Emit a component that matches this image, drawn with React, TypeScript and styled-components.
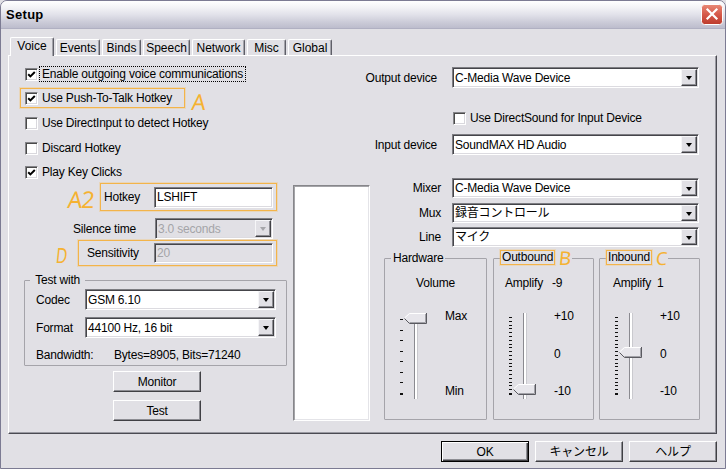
import React from "react";
import styled, { createGlobalStyle } from "styled-components";

const FACE = "#e1e0e5";
const ORANGE = "#f3b44a";

const GlobalStyle = createGlobalStyle`
  * { box-sizing: border-box; }
  html, body { margin: 0; padding: 0; background: ${FACE}; }
  body {
    font-family: "Liberation Sans", Arial, "Noto Sans CJK JP", sans-serif;
    font-size: 12px;
    letter-spacing: -0.2px;
    color: #000;
  }
`;

const Window = styled.div`
  width: 726px;
  height: 469px;
  display: flex;
  flex-direction: column;
  background: ${FACE};
  border: 1px solid #7c7b93;
  border-radius: 7px 7px 0 0;
  overflow: hidden;
`;

const TitleBar = styled.div`
  height: 28px;
  flex: none;
  display: flex;
  align-items: center;
  justify-content: space-between;
  padding: 0 2px 0 5px;
  background: linear-gradient(
    to bottom,
    #ffffff 0%,
    #f4f4f7 22%,
    #e2e2ea 50%,
    #cacad7 80%,
    #bdbdcd 100%
  );
  border-bottom: 1px solid #b0b0c2;
`;

const Title = styled.span`
  font-weight: 700;
  font-size: 13px;
  letter-spacing: 0.3px;
`;

const CloseBox = styled.div`
  width: 22px;
  height: 21px;
  display: flex;
`;

const Body = styled.div`
  flex: 1;
  display: flex;
  flex-direction: column;
  padding: 8px 8px 0 7px;
`;

const TabStrip = styled.div`
  height: 18px;
  display: flex;
  align-items: flex-end;
  gap: 2px;
  padding-left: 2px;
`;

const Tab = styled.div<{ $active?: boolean; $w: number }>`
  width: ${(p) => p.$w}px;
  height: ${(p) => (p.$active ? 19 : 16)}px;
  margin-bottom: ${(p) => (p.$active ? -1 : 0)}px;
  position: relative;
  z-index: ${(p) => (p.$active ? 2 : 1)};
  background: ${FACE};
  border-top: 1px solid #ffffff;
  border-left: 1px solid #ffffff;
  border-right: 1px solid #5f5f68;
  border-radius: 2px 2px 0 0;
  box-shadow: inset -1px 0 0 #a3a3aa;
  display: flex;
  align-items: center;
  justify-content: center;
  padding-bottom: ${(p) => (p.$active ? 2 : 0)}px;
  white-space: nowrap;
  letter-spacing: 0;
`;

const Panel = styled.div`
  height: 379px;
  flex: none;
  display: flex;
  border-top: 1px solid #ffffff;
  border-left: 1px solid #ffffff;
  border-right: 1px solid #4a4a52;
  border-bottom: 1px solid #4a4a52;
  box-shadow: inset -1px -1px 0 #9a9aa2;
`;

const LeftCol = styled.div`
  width: 282px;
  flex: none;
  display: flex;
  flex-direction: column;
  align-items: flex-start;
  padding-top: 10px;
`;

const RightArea = styled.div`
  flex: 1;
  display: flex;
  flex-direction: column;
  align-items: flex-start;
  padding-top: 11px;
`;

/* ---------- checkbox ---------- */

const Box = styled.span`
  width: 13px;
  height: 13px;
  flex: none;
  display: flex;
  align-items: center;
  justify-content: center;
  background: #ffffff;
  border-top: 1px solid #858589;
  border-left: 1px solid #858589;
  border-right: 1px solid #ffffff;
  border-bottom: 1px solid #ffffff;
  box-shadow: inset 1px 1px 0 #4a4a4a, inset -1px -1px 0 #d9d8dd;
`;

const CheckRow = styled.div<{ $ml: number; $mt: number }>`
  display: flex;
  align-items: center;
  gap: 2px;
  height: 16px;
  margin-left: ${(p) => p.$ml}px;
  margin-top: ${(p) => p.$mt}px;
`;

const CheckLabel = styled.span<{ $focus?: boolean }>`
  padding: 0 2px;
  line-height: 14px;
  white-space: nowrap;
  outline: ${(p) => (p.$focus ? "1px dotted #000" : "none")};
`;

function Check({ on }: { on?: boolean }) {
  return (
    <Box>
      {on && (
        <svg width="9" height="9" viewBox="0 0 9 9">
          <path
            d="M1.2 4.2 L3.4 6.4 L7.8 2"
            fill="none"
            stroke="#000"
            strokeWidth="2"
          />
        </svg>
      )}
    </Box>
  );
}

/* ---------- orange annotations ---------- */

const MarkFrame = styled.div<{ $w: number; $h: number; $pl: number }>`
  width: ${(p) => p.$w}px;
  height: ${(p) => p.$h}px;
  flex: none;
  display: flex;
  align-items: center;
  gap: 2px;
  padding: 0 3px 0 ${(p) => p.$pl}px;
  border: 1px solid ${ORANGE};
  box-shadow: 0 0 0 1px rgba(246, 196, 110, 0.35);
`;

const Annot = styled.span<{ $size: number; $sx?: number; $mt?: number }>`
  font-family: "Noto Sans", "DejaVu Sans", sans-serif;
  font-size: ${(p) => p.$size}px;
  line-height: 14px;
  height: 14px;
  color: #f5b232;
  display: inline-block;
  margin-top: ${(p) => p.$mt ?? 0}px;
  transform: skewX(-6deg) scaleX(${(p) => p.$sx ?? 1});
  transform-origin: left center;
  letter-spacing: -1px;
`;

const MarkRow = styled.div<{ $ml: number; $mt: number }>`
  display: flex;
  align-items: center;
  margin-left: ${(p) => p.$ml}px;
  margin-top: ${(p) => p.$mt}px;
`;

/* ---------- fields ---------- */

const FieldRow = styled.div<{ $pr: number; $mt: number }>`
  align-self: stretch;
  display: flex;
  align-items: center;
  justify-content: flex-end;
  padding-right: ${(p) => p.$pr}px;
  margin-top: ${(p) => p.$mt}px;
`;

const FieldLabel = styled.span<{ $grow?: boolean; $mr?: number; $w?: number }>`
  flex: ${(p) => (p.$grow ? 1 : "none")};
  width: ${(p) => (p.$w ? `${p.$w}px` : "auto")};
  margin-right: ${(p) => p.$mr ?? 0}px;
  white-space: nowrap;
  line-height: 14px;
`;

const Field = styled.div<{ $w: number; $h: number; $disabled?: boolean; $ml?: number }>`
  width: ${(p) => p.$w}px;
  height: ${(p) => p.$h}px;
  flex: none;
  margin-left: ${(p) => p.$ml ?? 0}px;
  display: flex;
  align-items: center;
  padding: 1px;
  background: ${(p) => (p.$disabled ? FACE : "#ffffff")};
  color: ${(p) => (p.$disabled ? "#a4a4a8" : "#000")};
  border-top: 1px solid #7d7d82;
  border-left: 1px solid #7d7d82;
  border-right: 1px solid #ffffff;
  border-bottom: 1px solid #ffffff;
  box-shadow: inset 1px 1px 0 #45454a, inset -1px -1px 0 #dcdbe0;
`;

const FieldText = styled.span`
  flex: 1;
  padding-left: 1px;
  line-height: 14px;
  white-space: nowrap;
  overflow: hidden;
`;

const ArrowBtn = styled.span<{ $disabled?: boolean }>`
  width: 16px;
  align-self: stretch;
  flex: none;
  display: flex;
  align-items: center;
  justify-content: center;
  background: ${FACE};
  border-top: 1px solid #f6f6f8;
  border-left: 1px solid #f6f6f8;
  border-right: 1px solid #404044;
  border-bottom: 1px solid #404044;
  box-shadow: inset -1px -1px 0 #8d8d93;
  &::after {
    content: "";
    width: 0;
    height: 0;
    margin-top: 1px;
    border-left: 3.5px solid transparent;
    border-right: 3.5px solid transparent;
    border-top: 4px solid ${(p) => (p.$disabled ? "#a6a6aa" : "#000")};
  }
`;

function Combo(props: { w: number; h: number; value: string; disabled?: boolean; ml?: number }) {
  return (
    <Field $w={props.w} $h={props.h} $disabled={props.disabled} $ml={props.ml}>
      <FieldText>{props.value}</FieldText>
      <ArrowBtn $disabled={props.disabled} />
    </Field>
  );
}

/* ---------- group boxes ---------- */

const Group = styled.fieldset<{ $w: number; $h: number; $ml?: number; $mt?: number }>`
  margin: ${(p) => p.$mt ?? 0}px 0 0 ${(p) => p.$ml ?? 0}px;
  padding: 0;
  min-inline-size: 0;
  width: ${(p) => p.$w}px;
  height: ${(p) => p.$h}px;
  flex: none;
  border: 1px solid #a5a4aa;
  border-radius: 1px;
`;

const Legend = styled.legend<{ $h: number; $ml?: number }>`
  margin-left: ${(p) => p.$ml ?? 6}px;
  padding: 0 1px;
  height: ${(p) => p.$h}px;
  line-height: ${(p) => p.$h - 2}px;
  border: 1px solid transparent;
  white-space: nowrap;
`;

const LegendMark = styled.span`
  display: inline-block;
  border: 1px solid ${ORANGE};
  box-shadow: 0 0 0 1px rgba(246, 196, 110, 0.3);
  padding: 0 1px;
  line-height: 13px;
  margin-left: -2px;
  margin-top: -1px;
  vertical-align: top;
`;

const GroupBody = styled.div<{ $pl?: number }>`
  display: flex;
  flex-direction: column;
  align-items: flex-start;
  padding-left: ${(p) => p.$pl ?? 0}px;
`;

const GroupRow = styled.div<{ $mt: number }>`
  display: flex;
  align-items: center;
  margin-top: ${(p) => p.$mt}px;
`;

const PushButton = styled.button<{ $ml?: number; $mt?: number; $default?: boolean }>`
  width: 88px;
  height: 21px;
  flex: none;
  margin: ${(p) => p.$mt ?? 0}px 0 0 ${(p) => p.$ml ?? 0}px;
  padding: 0;
  font: inherit;
  letter-spacing: inherit;
  color: #000;
  background: ${FACE};
  border-top: 1px solid ${(p) => (p.$default ? "#000" : "#ffffff")};
  border-left: 1px solid ${(p) => (p.$default ? "#000" : "#ffffff")};
  border-right: 1px solid ${(p) => (p.$default ? "#000" : "#404044")};
  border-bottom: 1px solid ${(p) => (p.$default ? "#000" : "#404044")};
  box-shadow: ${(p) =>
    p.$default
      ? "inset 1px 1px 0 #ffffff, inset -1px -1px 0 #404044, inset -2px -2px 0 #8d8d93"
      : "inset -1px -1px 0 #8d8d93"};
  line-height: 14px;
`;

/* ---------- right side ---------- */

const DeviceRow = styled.div<{ $mt?: number }>`
  display: flex;
  align-items: center;
  margin-top: ${(p) => p.$mt ?? 0}px;
`;

const RowLabel = styled.span<{ $w: number; $pr?: number }>`
  width: ${(p) => p.$w}px;
  flex: none;
  text-align: right;
  padding-right: ${(p) => p.$pr ?? 0}px;
  white-space: nowrap;
  line-height: 14px;
`;

const BottomArea = styled.div`
  display: flex;
  align-items: flex-start;
  margin-top: 23px;
`;

const MiddleBox = styled.div`
  width: 77px;
  height: 236px;
  flex: none;
  margin: 7px 0 0 2px;
  background: #ffffff;
  border-top: 1px solid #86868a;
  border-left: 1px solid #86868a;
  border-right: 1px solid #ffffff;
  border-bottom: 1px solid #ffffff;
  box-shadow: inset 1px 1px 0 #a4a4a8, inset -1px -1px 0 #e4e4e8;
`;

const MixerArea = styled.div`
  display: flex;
  flex-direction: column;
  align-items: flex-start;
`;

const GroupsRow = styled.div`
  display: flex;
  margin: 3px 0 0 14px;
`;

const AmpLine = styled.div<{ $center?: boolean; $pl?: number }>`
  align-self: stretch;
  margin-top: 9px;
  line-height: 14px;
  text-align: ${(p) => (p.$center ? "center" : "left")};
  padding-left: ${(p) => p.$pl ?? 0}px;
  white-space: nowrap;
`;

const AmpValue = styled.span<{ $gap: number }>`
  margin-left: ${(p) => p.$gap}px;
`;

const SliderRow = styled.div`
  display: flex;
  margin: 21px 0 0 13px;
`;

const ScaleCol = styled.div`
  height: 89px;
  margin: -2px 0 0 15px;
  display: flex;
  flex-direction: column;
  justify-content: space-between;
  line-height: 14px;
`;

const ButtonRow = styled.div`
  display: flex;
  justify-content: flex-end;
  gap: 6px;
  margin-top: 7px;
`;

function SliderArt({ ticks, pos, firstY }: { ticks: number; pos: number; firstY: number }) {
  const t = Math.round(2 + pos * 71);
  const last = 82;
  const ys = Array.from({ length: ticks }, (_, i) =>
    Math.round(firstY + (i * (last - firstY)) / (ticks - 1))
  );
  return (
    <svg width="32" height="90" viewBox="0 0 32 90" shapeRendering="crispEdges">
      {ys.map((y, i) => (
        <rect key={i} x="2" y={y} width="3" height={i === ys.length - 1 ? 2 : 1} fill="#111" />
      ))}
      <rect x="16" y="2" width="1" height="86" fill="#8a8a90" />
      <rect x="17" y="2" width="2" height="86" fill="#ffffff" />
      <rect x="19" y="2" width="1" height="86" fill="#c9c9ce" />
      <polygon
        points={`6,${t + 5} 11,${t} 28,${t} 28,${t + 10} 11,${t + 10}`}
        fill="#e7e6eb"
        shapeRendering="auto"
      />
      <polyline
        points={`6.5,${t + 5} 11.5,${t + 0.5} 27.5,${t + 0.5}`}
        fill="none"
        stroke="#ffffff"
        strokeWidth="1"
        shapeRendering="auto"
      />
      <polyline
        points={`6.5,${t + 5.5} 11.5,${t + 10.5} 28.5,${t + 10.5} 28.5,${t}`}
        fill="none"
        stroke="#5a5a60"
        strokeWidth="1"
        shapeRendering="auto"
      />
      <polyline
        points={`11.5,${t + 9.5} 27.5,${t + 9.5} 27.5,${t + 1}`}
        fill="none"
        stroke="#a2a2a8"
        strokeWidth="1"
        shapeRendering="auto"
      />
    </svg>
  );
}

const tabs = [
  { t: "Voice", w: 44, active: true },
  { t: "Events", w: 44 },
  { t: "Binds", w: 39 },
  { t: "Speech", w: 47 },
  { t: "Network", w: 53 },
  { t: "Misc", w: 39 },
  { t: "Global", w: 44 },
];

export default function App() {
  return (
    <>
      <GlobalStyle />
      <Window>
        <TitleBar>
          <Title>Setup</Title>
          <CloseBox>
            <svg width="22" height="21" viewBox="0 0 22 21">
              <defs>
                <linearGradient id="cg" x1="0" y1="0" x2="0" y2="1">
                  <stop offset="0" stopColor="#e98a77" />
                  <stop offset="0.5" stopColor="#d5594a" />
                  <stop offset="1" stopColor="#bd3b2c" />
                </linearGradient>
              </defs>
              <rect x="0.5" y="0.5" width="21" height="20" rx="3" fill="url(#cg)" stroke="#ffffff" />
              <path d="M6.5 5.5 L15.5 14.5 M15.5 5.5 L6.5 14.5" stroke="#ffffff" strokeWidth="2.2" strokeLinecap="square" />
            </svg>
          </CloseBox>
        </TitleBar>
        <Body>
          <TabStrip>
            {tabs.map((tb) => (
              <Tab key={tb.t} $w={tb.w} $active={tb.active}>
                {tb.t}
              </Tab>
            ))}
          </TabStrip>
          <Panel>
            <LeftCol>
              <CheckRow $ml={16} $mt={0}>
                <Check on />
                <CheckLabel $focus>Enable outgoing voice communications</CheckLabel>
              </CheckRow>
              <MarkRow $ml={11} $mt={6}>
                <MarkFrame $w={165} $h={20} $pl={4}>
                  <Check on />
                  <CheckLabel>Use Push-To-Talk Hotkey</CheckLabel>
                </MarkFrame>
                <Annot $size={22} $mt={5} style={{ marginLeft: 7 }}>
                  A
                </Annot>
              </MarkRow>
              <CheckRow $ml={16} $mt={7}>
                <Check />
                <CheckLabel>Use DirectInput to detect Hotkey</CheckLabel>
              </CheckRow>
              <CheckRow $ml={16} $mt={9}>
                <Check />
                <CheckLabel>Discard Hotkey</CheckLabel>
              </CheckRow>
              <CheckRow $ml={16} $mt={8}>
                <Check on />
                <CheckLabel>Play Key Clicks</CheckLabel>
              </CheckRow>
              <FieldRow $pr={14} $mt={3}>
                <Annot $size={23} $mt={3} style={{ marginRight: 6 }}>
                  A2
                </Annot>
                <MarkFrame $w={177} $h={28} $pl={3}>
                  <FieldLabel $grow>Hotkey</FieldLabel>
                  <Field $w={119} $h={21}>
                    <FieldText>LSHIFT</FieldText>
                  </Field>
                </MarkFrame>
              </FieldRow>
              <FieldRow $pr={18} $mt={7}>
                <FieldLabel $mr={19}>Silence time</FieldLabel>
                <Combo w={118} h={21} value="3.0 seconds" disabled />
              </FieldRow>
              <FieldRow $pr={14} $mt={1}>
                <Annot $size={21} $sx={0.75} $mt={4} style={{ marginRight: 8 }}>
                  D
                </Annot>
                <MarkFrame $w={199} $h={26} $pl={8}>
                  <FieldLabel $grow>Sensitivity</FieldLabel>
                  <Field $w={119} $h={20} $disabled>
                    <FieldText>20</FieldText>
                  </Field>
                </MarkFrame>
              </FieldRow>
              <Group $w={263} $h={94} $ml={15} $mt={6}>
                <Legend $h={16} $ml={5}>&nbsp;Test with&nbsp;</Legend>
                <GroupBody $pl={11}>
                  <GroupRow $mt={1}>
                    <FieldLabel $w={49}>Codec</FieldLabel>
                    <Combo w={191} h={21} value="GSM 6.10" />
                  </GroupRow>
                  <GroupRow $mt={7}>
                    <FieldLabel $w={49}>Format</FieldLabel>
                    <Combo w={191} h={21} value="44100 Hz, 16 bit" />
                  </GroupRow>
                  <GroupRow $mt={10}>
                    <FieldLabel $w={78}>Bandwidth:</FieldLabel>
                    <FieldLabel>Bytes=8905, Bits=71240</FieldLabel>
                  </GroupRow>
                </GroupBody>
              </Group>
              <PushButton $ml={104} $mt={5}>Monitor</PushButton>
              <PushButton $ml={104} $mt={8}>Test</PushButton>
            </LeftCol>
            <RightArea>
              <DeviceRow>
                <RowLabel $w={146}>Output device</RowLabel>
                <Combo ml={15} w={247} h={21} value="C-Media Wave Device" />
              </DeviceRow>
              <CheckRow $ml={162} $mt={22}>
                <Check />
                <CheckLabel>Use DirectSound for Input Device</CheckLabel>
              </CheckRow>
              <DeviceRow $mt={8}>
                <RowLabel $w={146}>Input device</RowLabel>
                <Combo ml={15} w={247} h={21} value="SoundMAX HD Audio" />
              </DeviceRow>
              <BottomArea>
                <MiddleBox />
                <MixerArea>
                  <DeviceRow>
                    <RowLabel $w={71}>Mixer</RowLabel>
                    <Combo ml={11} w={247} h={20} value="C-Media Wave Device" />
                  </DeviceRow>
                  <DeviceRow $mt={5}>
                    <RowLabel $w={71}>Mux</RowLabel>
                    <Combo ml={11} w={247} h={20} value="録音コントロール" />
                  </DeviceRow>
                  <DeviceRow $mt={4}>
                    <RowLabel $w={71}>Line</RowLabel>
                    <Combo ml={11} w={247} h={20} value="マイク" />
                  </DeviceRow>
                  <GroupsRow>
                    <Group $w={103} $h={170}>
                      <Legend $h={17}>Hardware</Legend>
                      <GroupBody>
                        <AmpLine $center>Volume</AmpLine>
                        <SliderRow>
                          <SliderArt ticks={8} pos={0} firstY={8} />
                          <ScaleCol>
                            <span>Max</span>
                            <span>Min</span>
                          </ScaleCol>
                        </SliderRow>
                      </GroupBody>
                    </Group>
                    <Group $w={101} $h={170} $ml={6}>
                      <Legend $h={17}>
                        <LegendMark>Outbound</LegendMark>
                        <Annot $size={19} $mt={0} style={{ marginLeft: 4, verticalAlign: "top" }}>
                          B
                        </Annot>
                      </Legend>
                      <GroupBody>
                        <AmpLine $pl={11}>
                          Amplify<AmpValue $gap={9}>-9</AmpValue>
                        </AmpLine>
                        <SliderRow>
                          <SliderArt ticks={21} pos={1} firstY={6} />
                          <ScaleCol>
                            <span>+10</span>
                            <span>0</span>
                            <span>-10</span>
                          </ScaleCol>
                        </SliderRow>
                      </GroupBody>
                    </Group>
                    <Group $w={101} $h={170} $ml={5}>
                      <Legend $h={17}>
                        <LegendMark>Inbound</LegendMark>
                        <Annot $size={18} $mt={0} style={{ marginLeft: 4, verticalAlign: "top" }}>
                          C
                        </Annot>
                      </Legend>
                      <GroupBody>
                        <AmpLine $pl={13}>
                          Amplify<AmpValue $gap={6}>1</AmpValue>
                        </AmpLine>
                        <SliderRow>
                          <SliderArt ticks={21} pos={0.48} firstY={6} />
                          <ScaleCol>
                            <span>+10</span>
                            <span>0</span>
                            <span>-10</span>
                          </ScaleCol>
                        </SliderRow>
                      </GroupBody>
                    </Group>
                  </GroupsRow>
                </MixerArea>
              </BottomArea>
            </RightArea>
          </Panel>
          <ButtonRow>
            <PushButton $default>OK</PushButton>
            <PushButton>キャンセル</PushButton>
            <PushButton>ヘルプ</PushButton>
          </ButtonRow>
        </Body>
      </Window>
    </>
  );
}
